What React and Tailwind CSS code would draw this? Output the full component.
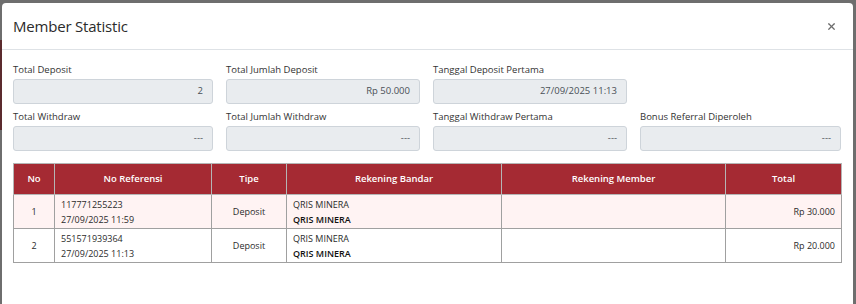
import React from 'react';
import { X } from 'lucide-react';

const fields = [
  { label: 'Total Deposit', value: '2' },
  { label: 'Total Jumlah Deposit', value: 'Rp 50.000' },
  { label: 'Tanggal Deposit Pertama', value: '27/09/2025 11:13' },
  null,
  { label: 'Total Withdraw', value: '---' },
  { label: 'Total Jumlah Withdraw', value: '---' },
  { label: 'Tanggal Withdraw Pertama', value: '---' },
  { label: 'Bonus Referral Diperoleh', value: '---' },
];

const rows = [
  { no: 1, ref: '117771255223', date: '27/09/2025 11:59', tipe: 'Deposit', bandar: 'QRIS MINERA', total: 'Rp 30.000' },
  { no: 2, ref: '551571939364', date: '27/09/2025 11:13', tipe: 'Deposit', bandar: 'QRIS MINERA', total: 'Rp 20.000' },
];

export default function App() {
  return (
    <div className="w-[856px] h-[304px] bg-[#6e6e6e] flex overflow-hidden" style={{ fontFamily: '"Open Sans", "Noto Sans", sans-serif' }}>
      <div className="w-[2px] flex flex-col shrink-0">
        <div className="h-[40px]" />
        <div className="h-[90px] bg-[#5b2b2e]" />
      </div>
      <div className="mt-[3px] w-[851px] h-[301px] bg-white rounded-t-[4px] flex flex-col">
        <div className="h-[47px] border-b border-[#dee2e6] flex items-center justify-between pl-[11px] pr-[16px]">
          <h1 className="text-[15px] font-medium text-[#2b2b2b] tracking-[-0.2px]">Member Statistic</h1>
          <X size={11} strokeWidth={2.6} className="text-[#6c6c6c]" />
        </div>
        <div className="pl-[11px] pt-[13px]">
          <div className="grid grid-cols-[200px_194px_194px_201px] gap-x-[13px] gap-y-[6px]">
            {fields.map((f, i) =>
              f ? (
                <div key={i}>
                  <div className="h-[14px] leading-[14px] text-[9.5px] text-[#333] mb-[2px]">{f.label}</div>
                  <div className="h-[25px] bg-[#e9ecef] border border-[#ced4da] rounded-[3px] flex items-center justify-end pr-[9px] text-[9.5px] text-[#495057]">
                    {f.value}
                  </div>
                </div>
              ) : (
                <div key={i} />
              )
            )}
          </div>
          <table className="mt-[12px] w-[828px] table-fixed border-collapse text-[9px] text-[#2b2b2b]">
            <colgroup>
              <col className="w-[41px]" />
              <col className="w-[157px]" />
              <col className="w-[75px]" />
              <col className="w-[215px]" />
              <col className="w-[224px]" />
              <col className="w-[116px]" />
            </colgroup>
            <thead>
              <tr className="h-[31px] bg-[#a52a33] text-white text-[9.5px]">
                <th className="border border-[#b5b5b5] font-semibold">No</th>
                <th className="border border-[#b5b5b5] font-semibold">No Referensi</th>
                <th className="border border-[#b5b5b5] font-semibold">Tipe</th>
                <th className="border border-[#b5b5b5] font-semibold">Rekening Bandar</th>
                <th className="border border-[#b5b5b5] font-semibold">Rekening Member</th>
                <th className="border border-[#b5b5b5] font-semibold">Total</th>
              </tr>
            </thead>
            <tbody>
              {rows.map((r, i) => (
                <tr key={r.no} className={`h-[34px] ${i === 0 ? 'bg-[#fff3f3]' : 'bg-white'}`}>
                  <td className="border border-[#a0a0a0] text-center">{r.no}</td>
                  <td className="border border-[#a0a0a0] pl-[6px] leading-[15px]">
                    <div>{r.ref}</div>
                    <div>{r.date}</div>
                  </td>
                  <td className="border border-[#a0a0a0] text-center">{r.tipe}</td>
                  <td className="border border-[#a0a0a0] pl-[6px] leading-[15px]">
                    <div>{r.bandar}</div>
                    <div className="font-semibold text-[#111]">{r.bandar}</div>
                  </td>
                  <td className="border border-[#a0a0a0]" />
                  <td className="border border-[#a0a0a0] text-right pr-[6px]">{r.total}</td>
                </tr>
              ))}
            </tbody>
          </table>
        </div>
      </div>
    </div>
  );
}
